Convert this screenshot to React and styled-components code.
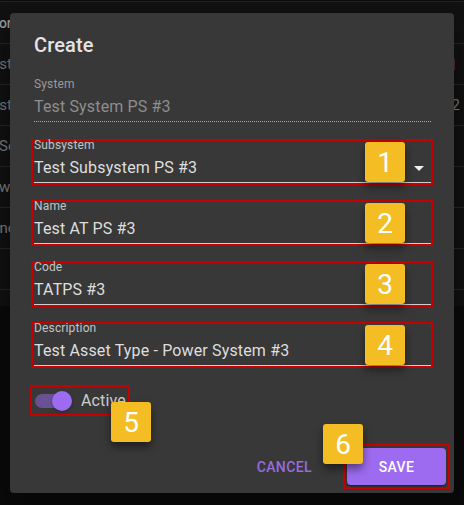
import React from "react";
import styled, { createGlobalStyle } from "styled-components";

const GlobalStyle = createGlobalStyle`
  html, body {
    margin: 0;
    padding: 0;
    background: #0b0b0b;
  }
  body {
    font-family: Roboto, "Noto Sans", sans-serif;
  }
`;

const Page = styled.div`
  position: relative;
  width: 464px;
  height: 505px;
  overflow: hidden;
  background: #0b0b0b;
`;

// table behind the backdrop
const Table = styled.div`
  margin-top: 1px;
  height: 304px;
  overflow: hidden;
  background: #121212;
  border-top: 1px solid #262626;
`;

const Row = styled.div`
  height: ${(p) => (p.$head ? 41 : 40)}px;
  border-bottom: 1px solid #262626;
  display: flex;
  align-items: center;
  justify-content: space-between;
  color: ${(p) => (p.$head ? "#9a9a9a" : "#7a7a7a")};
  font-size: ${(p) => (p.$head ? 14 : 15)}px;
  font-weight: ${(p) => (p.$head ? 500 : 400)};
`;

const Lead = styled.span`
  margin-left: ${(p) => p.$shift}px;
  white-space: nowrap;
`;

const Tail = styled.span`
  margin-right: 4px;
  color: #7a7a7a;
`;

const Chip = styled.span`
  width: 2px;
  height: 11px;
  margin-right: 10px;
  background: #3f6fa8;
  box-shadow: 1px 0 0 #4a2a2a;
`;

const Dialog = styled.div`
  position: absolute;
  top: 13px;
  left: 10px;
  width: 444px;
  height: 480px;
  background: #383838;
  border-radius: 4px;
  box-shadow: 0 11px 15px -7px rgba(0, 0, 0, 0.2),
    0 24px 38px 3px rgba(0, 0, 0, 0.14), 0 9px 46px 8px rgba(0, 0, 0, 0.12);
  display: flex;
  flex-direction: column;
`;

const Title = styled.h2`
  margin: 0;
  padding: 16px 24px;
  font-size: 20px;
  line-height: 32px;
  font-weight: 500;
  letter-spacing: 0.15px;
  color: #e4e4e4;
`;

const Content = styled.div`
  flex: 1;
  padding: 1px 24px 0;
  display: flex;
  flex-direction: column;
  gap: 15px;
`;

const FieldBox = styled.div`
  position: relative;
  margin: 0 -3px;
  padding: 0 0 0 1px;
  border: 2px solid ${(p) => (p.$marked ? "#c90000" : "transparent")};
`;

const Label = styled.div`
  margin-top: -2px;
  font-size: 12px;
  line-height: 12px;
  letter-spacing: 0.15px;
  color: ${(p) => (p.$disabled ? "#9a9a9a" : "#c4c4c4")};
`;

const InputRow = styled.div`
  margin-top: 3px;
  padding: 4px 0 5px;
  display: flex;
  align-items: center;
  height: 19px;
  font-size: 16px;
  line-height: 19px;
  letter-spacing: 0.15px;
  color: ${(p) => (p.$disabled ? "#8e8e8e" : "#dedede")};
  border-bottom: 1px ${(p) => (p.$disabled ? "dotted #a8a8a8" : "solid #cfcfcf")};
`;

const Value = styled.span`
  flex: 1;
  white-space: nowrap;
`;

const Arrow = styled.svg`
  flex: none;
  width: 24px;
  height: 24px;
  margin: -2px 0 -3px;
  fill: #f0f0f0;
`;

const Badge = styled.div`
  position: absolute;
  left: ${(p) => p.$x}px;
  top: ${(p) => p.$y}px;
  z-index: 2;
  width: 40px;
  height: 40px;
  border-radius: 3px;
  background: #f4bd23;
  color: #ffffff;
  font-size: 28px;
  letter-spacing: 0;
  display: flex;
  align-items: center;
  justify-content: center;
  box-shadow: 0 5px 8px rgba(0, 0, 0, 0.45);
`;

const SwitchBox = styled.label`
  position: relative;
  align-self: flex-start;
  margin: 2px 0 0 -4px;
  width: 93px;
  height: 27px;
  padding-left: 3px;
  display: flex;
  align-items: center;
  border: 2px solid #c90000;
`;

const SwitchControl = styled.span`
  position: relative;
  flex: none;
  width: 37px;
  height: 20px;
`;

const Track = styled.span`
  position: absolute;
  left: 0;
  top: 3px;
  width: 34px;
  height: 14px;
  border-radius: 7px;
  background: #6a5196;
`;

const Thumb = styled.span`
  position: absolute;
  left: 17px;
  top: 0;
  width: 20px;
  height: 20px;
  border-radius: 50%;
  background: #9d6bf0;
  box-shadow: 0 1px 3px rgba(0, 0, 0, 0.3);
`;

const SwitchText = styled.span`
  margin-left: 9px;
  font-size: 16px;
  letter-spacing: 0.15px;
  color: #cdcdcd;
`;

const Actions = styled.div`
  padding: 4px;
  display: flex;
  justify-content: flex-end;
  align-items: center;
`;

const TextButton = styled.button`
  margin-right: 23px;
  padding: 6px 8px;
  border: 0;
  background: none;
  font-family: inherit;
  font-size: 14px;
  font-weight: 500;
  letter-spacing: 0.4px;
  text-transform: uppercase;
  color: #976ce0;
`;

const SaveBox = styled.div`
  position: relative;
  padding: 2px;
  border: 2px solid #c90000;
`;

const SaveButton = styled.button`
  display: block;
  width: 99px;
  height: 37px;
  border: 0;
  border-radius: 4px;
  background: #9d6bf0;
  color: #ffffff;
  font-family: inherit;
  font-size: 14px;
  font-weight: 500;
  letter-spacing: 0.4px;
  text-transform: uppercase;
  box-shadow: 0 3px 1px -2px rgba(0, 0, 0, 0.2), 0 2px 2px rgba(0, 0, 0, 0.14),
    0 1px 5px rgba(0, 0, 0, 0.12);
`;

const rows = [
  { text: "Test", shift: -17, tail: "chip" },
  { text: "Test", shift: -17, tail: "2" },
  { text: "Sensor", shift: -1 },
  { text: "Power", shift: -19 },
  { text: "Enclosure", shift: -9 },
  { text: "", shift: 0 },
  { text: "", shift: 0 },
];

const fields = [
  { label: "Subsystem", value: "Test Subsystem PS #3", n: 1, select: true },
  { label: "Name", value: "Test AT PS #3", n: 2 },
  { label: "Code", value: "TATPS #3", n: 3 },
  { label: "Description", value: "Test Asset Type - Power System #3", n: 4 },
];

function App() {
  return (
    <Page>
      <GlobalStyle />
      <Table>
        <Row $head>
          <Lead $shift={-33}>Vendor</Lead>
        </Row>
        {rows.map((r, i) => (
          <Row key={i}>
            <Lead $shift={r.shift}>{r.text}</Lead>
            {r.tail === "chip" && <Chip />}
            {r.tail === "2" && <Tail>2</Tail>}
          </Row>
        ))}
      </Table>

      <Dialog>
        <Title>Create</Title>
        <Content>
          <FieldBox>
            <Label $disabled>System</Label>
            <InputRow $disabled>
              <Value>Test System PS #3</Value>
            </InputRow>
          </FieldBox>

          {fields.map((f) => (
            <FieldBox $marked key={f.n}>
              <Label>{f.label}</Label>
              <InputRow>
                <Value>{f.value}</Value>
                {f.select && (
                  <Arrow viewBox="0 0 24 24">
                    <path d="M7 10l5 5 5-5z" />
                  </Arrow>
                )}
              </InputRow>
              <Badge $x={332} $y={1}>
                {f.n}
              </Badge>
            </FieldBox>
          ))}

          <SwitchBox>
            <SwitchControl>
              <Track />
              <Thumb />
            </SwitchControl>
            <SwitchText>Active</SwitchText>
            <Badge $x={79} $y={15}>
              5
            </Badge>
          </SwitchBox>
        </Content>

        <Actions>
          <TextButton>Cancel</TextButton>
          <SaveBox>
            <SaveButton>Save</SaveButton>
            <Badge $x={-22} $y={-22}>
              6
            </Badge>
          </SaveBox>
        </Actions>
      </Dialog>
    </Page>
  );
}

export default App;
